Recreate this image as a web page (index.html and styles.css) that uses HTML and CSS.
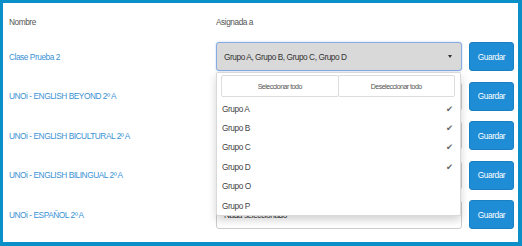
FILE: index.html
```html
<!DOCTYPE html>
<html lang="es">
<head>
  <meta charset="UTF-8" />
  <meta name="viewport" content="width=device-width, initial-scale=1.0" />
  <title>Asignar clases</title>
  <link rel="stylesheet" href="styles.css">
</head>
<body>

  <div class="panel">
    <div class="row head">
      <div class="name">Nombre</div>
      <div class="groups">Asignada a</div>
    </div>

    <div class="rows">
      <div class="row">
        <a class="name" href="#">Clase Prueba 2</a>
        <div class="picker">
          <div class="select open">
            <span class="value">Grupo A, Grupo B, Grupo C, Grupo D</span>
            <span class="caret"></span>
          </div>
          <div class="menu">
            <div class="actions">
              <button>Seleccionar todo</button>
              <button>Deseleccionar todo</button>
            </div>
            <ul class="options">
              <li>Grupo A <span class="check">&#10004;</span></li>
              <li>Grupo B <span class="check">&#10004;</span></li>
              <li>Grupo C <span class="check">&#10004;</span></li>
              <li>Grupo D <span class="check">&#10004;</span></li>
              <li>Grupo O</li>
              <li>Grupo P</li>
            </ul>
          </div>
        </div>
        <button class="save">Guardar</button>
      </div>

      <!-- these three selects sit under the open menu -->
      <div class="row">
        <a class="name" href="#">UNOi - ENGLISH BEYOND 2º A</a>
        <div class="picker">
          <div class="select"><span class="caret"></span></div>
        </div>
        <button class="save">Guardar</button>
      </div>

      <div class="row">
        <a class="name" href="#">UNOi - ENGLISH BICULTURAL 2º A</a>
        <div class="picker">
          <div class="select"><span class="caret"></span></div>
        </div>
        <button class="save">Guardar</button>
      </div>

      <div class="row">
        <a class="name" href="#">UNOi - ENGLISH BILINGUAL 2º A</a>
        <div class="picker">
          <div class="select"><span class="caret"></span></div>
        </div>
        <button class="save">Guardar</button>
      </div>

      <div class="row">
        <a class="name" href="#">UNOi - ESPAÑOL 2º A</a>
        <div class="picker">
          <div class="select"><span class="value">Nada seleccionado</span><span class="caret"></span></div>
        </div>
        <button class="save">Guardar</button>
      </div>
    </div>
  </div>

</body>
</html>
```

FILE: styles.css
```css
* {
  box-sizing: border-box;
  margin: 0;
  padding: 0;
}
body {
  font-family: "Liberation Sans", Arial, sans-serif;
  font-size: 8.3px;
  letter-spacing: -0.45px;
  color: #333;
  background: #fff;
}
.panel {
  height: 246px;
  border-style: solid;
  border-color: #0b8fc9;
  border-width: 3px 4px 4px 3px;
  padding: 9px 0 0 6px;
  overflow: hidden;
}
.row {
  display: flex;
  align-items: center;
  height: 29px;
}
.row.head {
  height: 20px;
  margin-bottom: 10px;
  color: #555;
}
.rows {
  display: flex;
  flex-direction: column;
  gap: 10.5px;
}
.name {
  width: 207px;
  flex: none;
}
a.name {
  color: #3a92d4;
  text-decoration: none;
}
.picker {
  position: relative;
  width: 246px;
  flex: none;
}
.select {
  height: 29px;
  display: flex;
  align-items: center;
  justify-content: space-between;
  padding: 0 7px;
  border: 1px solid #ccc;
  border-radius: 3px;
  background: #fff;
  color: #333;
}
.select.open {
  background: #d9d9d9;
  border-color: #86ace2;
  box-shadow: 0 0 2px rgba(102, 150, 233, 0.5);
}
.caret {
  width: 0;
  height: 0;
  margin-left: auto;
  margin-right: 2px;
  border-left: 2.5px solid transparent;
  border-right: 2.5px solid transparent;
  border-top: 3px solid #333;
}
.menu {
  position: absolute;
  top: 30px;
  left: 0;
  width: 245px;
  z-index: 10;
  background: #fff;
  border: 1px solid rgba(0, 0, 0, 0.15);
  border-radius: 2px;
  box-shadow: 0 4px 8px rgba(0, 0, 0, 0.18);
}
.actions {
  display: flex;
  margin: 2px 5px 0 4px;
}
.actions button {
  flex: 1;
  height: 22px;
  background: #fff;
  border: 1px solid #ddd;
  border-radius: 2px;
  font-family: inherit;
  font-size: 7px;
  letter-spacing: -0.5px;
  color: #555;
}
.actions button + button {
  margin-left: -1px;
}
.options {
  list-style: none;
  margin-top: 2px;
}
.options li {
  height: 19.4px;
  display: flex;
  align-items: center;
  justify-content: space-between;
  padding: 0 7px 0 5px;
  color: #444;
}
.check {
  font-family: "DejaVu Sans", sans-serif;
  font-size: 8.5px;
  letter-spacing: 0;
  color: #666;
}
.save {
  width: 45px;
  height: 29px;
  margin-left: 7px;
  flex: none;
  background: #1e8dd6;
  border: 1px solid #1a80c4;
  border-radius: 3px;
  color: #fff;
  font-family: inherit;
  font-size: 8.3px;
  letter-spacing: -0.45px;
}
```
